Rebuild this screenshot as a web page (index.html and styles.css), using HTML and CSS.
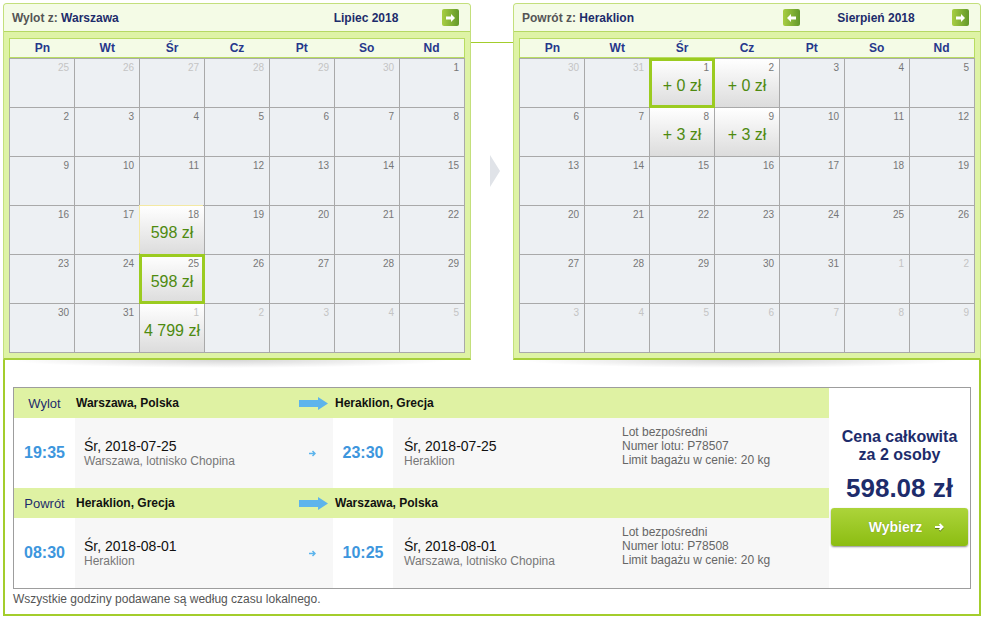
FILE: index.html
```html
<!doctype html>
<html lang="pl">
  <head>
    <meta charset="utf-8">
    <title>Wybór lotu</title>
    <link rel="stylesheet" href="styles.css">
  </head>
  <body>
    <div class="planner">
      <div class="calendars">
        <div class="month-col">
          <div class="cal">
            <div class="cal-head">
              <div class="cal-title">Wylot z: <b>Warszawa</b></div>
              <div class="nav">
                <span class="nav-btn hidden"></span>
                <span class="month-name">Lipiec 2018</span>
                <span class="nav-btn"><svg width="9" height="8" viewBox="0 0 9 8"><path d="M0 2.5h5V0l4 4-4 4V5.5H0z" fill="#fff"/></svg></span>
              </div>
            </div>
            <div class="cal-body">
              <div class="weekdays"><span>Pn</span><span>Wt</span><span>Śr</span><span>Cz</span><span>Pt</span><span>So</span><span>Nd</span></div>
              <div class="days">
                <div class="day other"><span class="num">25</span></div>
                <div class="day other"><span class="num">26</span></div>
                <div class="day other"><span class="num">27</span></div>
                <div class="day other"><span class="num">28</span></div>
                <div class="day other"><span class="num">29</span></div>
                <div class="day other"><span class="num">30</span></div>
                <div class="day"><span class="num">1</span></div>
                <div class="day"><span class="num">2</span></div>
                <div class="day"><span class="num">3</span></div>
                <div class="day"><span class="num">4</span></div>
                <div class="day"><span class="num">5</span></div>
                <div class="day"><span class="num">6</span></div>
                <div class="day"><span class="num">7</span></div>
                <div class="day"><span class="num">8</span></div>
                <div class="day"><span class="num">9</span></div>
                <div class="day"><span class="num">10</span></div>
                <div class="day"><span class="num">11</span></div>
                <div class="day"><span class="num">12</span></div>
                <div class="day"><span class="num">13</span></div>
                <div class="day"><span class="num">14</span></div>
                <div class="day"><span class="num">15</span></div>
                <div class="day"><span class="num">16</span></div>
                <div class="day"><span class="num">17</span></div>
                <div class="day priced hover"><span class="num">18</span><span class="fare">598 zł</span></div>
                <div class="day"><span class="num">19</span></div>
                <div class="day"><span class="num">20</span></div>
                <div class="day"><span class="num">21</span></div>
                <div class="day"><span class="num">22</span></div>
                <div class="day"><span class="num">23</span></div>
                <div class="day"><span class="num">24</span></div>
                <div class="day priced picked"><span class="num">25</span><span class="fare">598 zł</span></div>
                <div class="day"><span class="num">26</span></div>
                <div class="day"><span class="num">27</span></div>
                <div class="day"><span class="num">28</span></div>
                <div class="day"><span class="num">29</span></div>
                <div class="day"><span class="num">30</span></div>
                <div class="day"><span class="num">31</span></div>
                <div class="day other priced"><span class="num">1</span><span class="fare">4 799 zł</span></div>
                <div class="day other"><span class="num">2</span></div>
                <div class="day other"><span class="num">3</span></div>
                <div class="day other"><span class="num">4</span></div>
                <div class="day other"><span class="num">5</span></div>
              </div>
            </div>
          </div>
          <div class="cal-shadow"></div>
        </div>

        <div class="link"><div class="link-arrow"></div></div>

        <div class="month-col">
          <div class="cal">
            <div class="cal-head">
              <div class="cal-title">Powrót z: <b>Heraklion</b></div>
              <div class="nav">
                <span class="nav-btn"><svg width="9" height="8" viewBox="0 0 9 8"><path d="M9 2.5H4V0L0 4l4 4V5.5h5z" fill="#fff"/></svg></span>
                <span class="month-name">Sierpień 2018</span>
                <span class="nav-btn"><svg width="9" height="8" viewBox="0 0 9 8"><path d="M0 2.5h5V0l4 4-4 4V5.5H0z" fill="#fff"/></svg></span>
              </div>
            </div>
            <div class="cal-body">
              <div class="weekdays"><span>Pn</span><span>Wt</span><span>Śr</span><span>Cz</span><span>Pt</span><span>So</span><span>Nd</span></div>
              <div class="days">
                <div class="day other"><span class="num">30</span></div>
                <div class="day other"><span class="num">31</span></div>
                <div class="day priced picked"><span class="num">1</span><span class="fare">+ 0 zł</span></div>
                <div class="day priced"><span class="num">2</span><span class="fare">+ 0 zł</span></div>
                <div class="day"><span class="num">3</span></div>
                <div class="day"><span class="num">4</span></div>
                <div class="day"><span class="num">5</span></div>
                <div class="day"><span class="num">6</span></div>
                <div class="day"><span class="num">7</span></div>
                <div class="day priced"><span class="num">8</span><span class="fare">+ 3 zł</span></div>
                <div class="day priced"><span class="num">9</span><span class="fare">+ 3 zł</span></div>
                <div class="day"><span class="num">10</span></div>
                <div class="day"><span class="num">11</span></div>
                <div class="day"><span class="num">12</span></div>
                <div class="day"><span class="num">13</span></div>
                <div class="day"><span class="num">14</span></div>
                <div class="day"><span class="num">15</span></div>
                <div class="day"><span class="num">16</span></div>
                <div class="day"><span class="num">17</span></div>
                <div class="day"><span class="num">18</span></div>
                <div class="day"><span class="num">19</span></div>
                <div class="day"><span class="num">20</span></div>
                <div class="day"><span class="num">21</span></div>
                <div class="day"><span class="num">22</span></div>
                <div class="day"><span class="num">23</span></div>
                <div class="day"><span class="num">24</span></div>
                <div class="day"><span class="num">25</span></div>
                <div class="day"><span class="num">26</span></div>
                <div class="day"><span class="num">27</span></div>
                <div class="day"><span class="num">28</span></div>
                <div class="day"><span class="num">29</span></div>
                <div class="day"><span class="num">30</span></div>
                <div class="day"><span class="num">31</span></div>
                <div class="day other"><span class="num">1</span></div>
                <div class="day other"><span class="num">2</span></div>
                <div class="day other"><span class="num">3</span></div>
                <div class="day other"><span class="num">4</span></div>
                <div class="day other"><span class="num">5</span></div>
                <div class="day other"><span class="num">6</span></div>
                <div class="day other"><span class="num">7</span></div>
                <div class="day other"><span class="num">8</span></div>
                <div class="day other"><span class="num">9</span></div>
              </div>
            </div>
          </div>
          <div class="cal-shadow"></div>
        </div>
      </div>

      <div class="trip">
        <div class="legs">
          <div class="leg-head">
            <span class="label">Wylot</span>
            <span class="from-city">Warszawa, Polska <svg width="29" height="13" viewBox="0 0 29 13"><path d="M0 3h19V0l10 6.5L19 13v-3H0z" fill="#5db4ec"/></svg></span>
            <span class="to-city">Heraklion, Grecja</span>
          </div>
          <div class="leg-body">
            <div class="time">19:35</div>
            <div class="stop dep">
              <div class="where">
                <div class="date">Śr, 2018-07-25</div>
                <div class="place">Warszawa, lotnisko Chopina</div>
              </div>
              <svg width="7" height="7" viewBox="0 0 7 7"><path d="M0 3.5h6M3.5 1l2.5 2.5L3.5 6" stroke="#5cb4ec" stroke-width="1.5" fill="none"/></svg>
            </div>
            <div class="time arr">23:30</div>
            <div class="stop">
              <div class="where wide">
                <div class="date">Śr, 2018-07-25</div>
                <div class="place">Heraklion</div>
              </div>
              <div class="info">Lot bezpośredni<br>Numer lotu: P78507<br>Limit bagażu w cenie: 20 kg</div>
            </div>
          </div>
          <div class="leg-head">
            <span class="label">Powrót</span>
            <span class="from-city">Heraklion, Grecja <svg width="29" height="13" viewBox="0 0 29 13"><path d="M0 3h19V0l10 6.5L19 13v-3H0z" fill="#5db4ec"/></svg></span>
            <span class="to-city">Warszawa, Polska</span>
          </div>
          <div class="leg-body">
            <div class="time">08:30</div>
            <div class="stop dep">
              <div class="where">
                <div class="date">Śr, 2018-08-01</div>
                <div class="place">Heraklion</div>
              </div>
              <svg width="7" height="7" viewBox="0 0 7 7"><path d="M0 3.5h6M3.5 1l2.5 2.5L3.5 6" stroke="#5cb4ec" stroke-width="1.5" fill="none"/></svg>
            </div>
            <div class="time arr">10:25</div>
            <div class="stop">
              <div class="where wide">
                <div class="date">Śr, 2018-08-01</div>
                <div class="place">Warszawa, lotnisko Chopina</div>
              </div>
              <div class="info">Lot bezpośredni<br>Numer lotu: P78508<br>Limit bagażu w cenie: 20 kg</div>
            </div>
          </div>
        </div>
        <div class="total">
          <div class="total-label">Cena całkowita<br>za 2 osoby</div>
          <div class="total-amount">598.08 zł</div>
          <a class="choose" href="#">Wybierz <svg width="9" height="8" viewBox="0 0 9 8"><path d="M0 4h7.5M4.5 1l3 3-3 3" stroke="#fff" stroke-width="2" fill="none"/></svg></a>
        </div>
      </div>
      <p class="note">Wszystkie godziny podawane są według czasu lokalnego.</p>
    </div>
  </body>
</html>
```

FILE: styles.css
```css
body {
  margin: 0;
  background: #fff;
  color: #222;
  font-family: "Liberation Sans", Arial, Helvetica, sans-serif;
}

/* outer frame, calendars hang over its top edge */
.planner {
  width: 978px;
  box-sizing: border-box;
  margin: 42px 0 0 3px;
  padding: 0 8px 8px;
  border: 2px solid #a3cd2c;
  border-top-width: 1px;
}
.calendars {
  display: flex;
  margin: -40px -10px 0;
}
.month-col {
  width: 468px;
}
.cal {
  border: 1px solid #c3df7c;
  border-bottom: 2px solid #a7cf3a;
  border-radius: 4px 4px 0 0;
  background: #def3a5;
}
.cal-head {
  display: flex;
  align-items: center;
  height: 27px;
  padding: 0 11px 0 8px;
  background: #f4fbe6;
  border-bottom: 1px solid #b5d862;
  border-radius: 3px 3px 0 0;
  font-size: 12px;
  font-weight: bold;
}
.cal-title {
  flex: 1;
  color: #555;
}
.cal-title b {
  color: #1d2c6b;
}
.nav {
  display: flex;
  align-items: center;
}
.nav-btn {
  display: flex;
  align-items: center;
  justify-content: center;
  width: 17px;
  height: 17px;
  border-radius: 2px;
  background: linear-gradient(to right, #a8ce42, #62982a);
}
.nav-btn.hidden {
  visibility: hidden;
}
.month-name {
  width: 152px;
  text-align: center;
  color: #1d2c6b;
}
.cal-body {
  padding: 6px 5px 5px;
}
.weekdays {
  display: grid;
  grid-template-columns: repeat(7, 1fr);
  height: 18px;
  line-height: 18px;
  border: 1px solid #b8dc62;
  background: #f4fbe6;
  text-align: center;
  font-size: 12px;
  font-weight: bold;
  color: #26378c;
}
.days {
  display: grid;
  grid-template-columns: repeat(7, 64px);
  grid-auto-rows: 48px;
  gap: 1px;
  padding: 1px;
  background: #a9a9a9;
}
.day {
  background: #edf0f3;
}
.num {
  display: block;
  padding: 3px 5px 0;
  text-align: right;
  font-size: 10px;
  line-height: 12px;
  color: #777;
}
.other .num {
  color: #c4c4c4;
}
.priced {
  background: linear-gradient(#fff, #dcdcdc);
}
.fare {
  display: block;
  margin-top: 2px;
  text-align: center;
  font-size: 16px;
  line-height: 20px;
  color: #4e8a10;
}
.picked {
  z-index: 1;
  outline: 3px solid #9bcb20;
  outline-offset: -2px;
}
.hover {
  z-index: 1;
  box-shadow: -1px -1px 0 #f4e9a3;
}
.cal-shadow {
  height: 8px;
  margin: 0 22px 0 8px;
  background: radial-gradient(ellipse 50% 100% at 50% 0, rgba(0,0,0,0.16), rgba(0,0,0,0));
}
.link {
  width: 42px;
}
.link-arrow {
  width: 0;
  height: 0;
  margin: 152px 0 0 19px;
  border-left: 10px solid #e0e3e8;
  border-top: 16px solid transparent;
  border-bottom: 16px solid transparent;
}

/* selected flights */
.trip {
  display: flex;
  margin-top: 19px;
  border: 1px solid #9d9d9d;
}
.legs {
  width: 815px;
}
.leg-head {
  display: flex;
  align-items: center;
  height: 30px;
  background: #dff2a3;
  font-size: 12px;
  font-weight: bold;
  color: #111;
}
.label {
  width: 61px;
  text-align: center;
  font-size: 13px;
  font-weight: normal;
  color: #1d2c6b;
}
.from-city {
  display: flex;
  align-items: center;
  justify-content: space-between;
  box-sizing: border-box;
  width: 258px;
  padding: 0 5px 0 1px;
}
.to-city {
  padding-left: 2px;
}
.leg-body {
  display: flex;
  height: 70px;
}
.time {
  display: flex;
  align-items: center;
  justify-content: center;
  width: 61px;
  background: #fff;
  font-size: 16px;
  font-weight: bold;
  color: #3d96dd;
}
.time.arr {
  width: 60px;
}
.stop {
  display: flex;
  align-items: center;
  flex: 1;
  padding-left: 11px;
  background: #f7f7f7;
}
.stop.dep {
  flex: none;
  justify-content: space-between;
  box-sizing: border-box;
  width: 258px;
  padding: 0 17px 0 9px;
}
.where.wide {
  width: 218px;
}
.date {
  font-size: 14px;
  line-height: 16px;
  color: #111;
}
.place {
  font-size: 12px;
  line-height: 14px;
  color: #777;
}
.info {
  align-self: flex-start;
  padding-top: 7px;
  font-size: 12px;
  line-height: 14px;
  color: #666;
}
.total {
  flex: 1;
  padding-top: 40px;
  background: #fff;
  text-align: center;
  color: #1d2c6b;
}
.total-label {
  font-size: 16px;
  line-height: 18px;
  font-weight: bold;
}
.total-amount {
  margin-top: 9px;
  font-size: 26px;
  line-height: 30px;
  font-weight: bold;
}
.choose {
  display: flex;
  align-items: center;
  justify-content: center;
  gap: 13px;
  width: 137px;
  height: 38px;
  box-sizing: border-box;
  margin: 5px auto 0;
  padding-left: 14px;
  border-radius: 3px;
  background: linear-gradient(#acd43a, #8cbd12);
  box-shadow: 0 1px 2px rgba(0,0,0,0.45);
  color: #fff;
  font-size: 14px;
  font-weight: bold;
  text-decoration: none;
  text-shadow: 0 0 1px rgba(0,0,0,0.35);
}
.choose svg {
  filter: drop-shadow(0 1px 0 rgba(0,0,0,0.4));
}
.note {
  margin: 3px 0 0;
  font-size: 12px;
  line-height: 14px;
  color: #555;
}
```
